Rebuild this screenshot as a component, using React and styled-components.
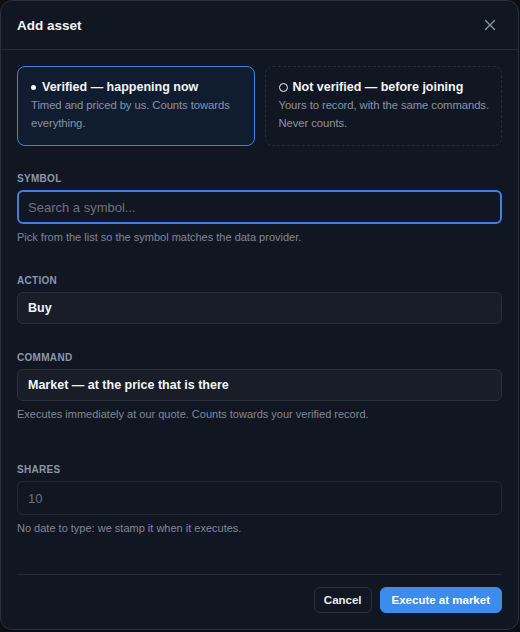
import React from 'react';
import styled, {createGlobalStyle} from 'styled-components';

const GlobalStyle = createGlobalStyle`
    html, body {
        margin: 0;
        padding: 0;
        background: #0b0e14;
        font-family: "Liberation Sans", Arial, sans-serif;
    }
    * { box-sizing: border-box; }
`;

const Dialog = styled.div`
    width: 519px;
    height: 630px;
    background: #111722;
    border: 1px solid #2b303b;
    border-radius: 12px;
    display: flex;
    flex-direction: column;
    color: #e8ecf2;
`;

const Header = styled.div`
    height: 49px;
    padding: 0 16px;
    border-bottom: 1px solid #262b36;
    display: flex;
    align-items: center;
    justify-content: space-between;
`;

const Title = styled.h2`
    margin: 0;
    font-size: 13.5px;
    font-weight: 700;
    color: #f3f5f8;
`;

const CloseButton = styled.button`
    background: none;
    border: none;
    padding: 0;
    width: 16px;
    height: 16px;
    color: #8a98ab;
    display: flex;
    align-items: center;
    justify-content: center;
    margin-right: 4px;
`;

const Body = styled.div`
    flex: 1;
    padding: 16px 16px 16px;
    display: flex;
    flex-direction: column;
`;

const Modes = styled.div`
    display: grid;
    grid-template-columns: 1fr 1fr;
    gap: 10px;
`;

const ModeCard = styled.div`
    height: 80px;
    padding: 11px 6px 11px 13px;
    border-radius: 8px;
    border: 1px ${p => p.active ? 'solid #3b82e6' : 'dashed #262c37'};
    background: ${p => p.active ? '#101c30' : 'transparent'};
`;

const ModeTitle = styled.div`
    font-size: 12.5px;
    font-weight: 700;
    line-height: 18px;
    color: #f3f5f8;
    display: flex;
    align-items: center;
`;

const Mark = styled.span`
    flex: none;
    width: ${p => p.filled ? 5 : 9}px;
    height: ${p => p.filled ? 5 : 9}px;
    margin: ${p => p.filled ? '0 6px 0 0' : '0 5px 0 0'};
    border-radius: 50%;
    border: ${p => p.filled ? 'none' : '1.5px solid #f3f5f8'};
    background: ${p => p.filled ? '#f3f5f8' : 'transparent'};
`;

const ModeText = styled.div`
    font-size: 11.3px;
    letter-spacing: -0.08px;
    line-height: 18px;
    color: #8a94a3;
`;

const Field = styled.div`
    margin-top: ${p => p.gap}px;
    display: flex;
    flex-direction: column;
`;

const Label = styled.label`
    font-size: 10px;
    font-weight: 700;
    line-height: 12px;
    letter-spacing: 0.03em;
    text-transform: uppercase;
    color: #8a97aa;
    margin-bottom: 5px;
`;

const TextInput = styled.div`
    height: 34px;
    border-radius: 6px;
    border: ${p => p.focused ? '2px solid #3b82e6' : '1px solid #232935'};
    padding: 0 ${p => p.focused ? 9 : 10}px;
    display: flex;
    align-items: center;
    font-size: 13px;
    color: #6b7280;
`;

const Select = styled.div`
    height: 32px;
    border-radius: 6px;
    border: 1px solid #2a303c;
    background: #181d28;
    padding: 0 10px;
    display: flex;
    align-items: center;
    font-size: 12.5px;
    font-weight: 700;
    color: #f3f5f8;
`;

const Help = styled.div`
    margin-top: 6px;
    font-size: 11px;
    line-height: 14px;
    color: #7f8896;
`;

const Footer = styled.div`
    margin-top: auto;
    padding-top: 12px;
    border-top: 1px solid #262b36;
    display: flex;
    justify-content: flex-end;
    gap: 8px;
`;

const Button = styled.button`
    height: 26px;
    padding: 0 ${p => p.primary ? 11 : 9}px;
    border-radius: 6px;
    font-family: inherit;
    font-size: 11.5px;
    font-weight: 700;
    border: 1px solid ${p => p.primary ? '#3d8bea' : '#2b313c'};
    background: ${p => p.primary ? '#3d8bea' : 'transparent'};
    color: ${p => p.primary ? '#ffffff' : '#e8ecf2'};
`;

export default function App() {
    return (
        <Dialog>
            <GlobalStyle />
            <Header>
                <Title>Add asset</Title>
                <CloseButton aria-label="Close">
                    <svg width="12" height="12" viewBox="0 0 12 12" fill="none" stroke="currentColor" strokeWidth="1.3" strokeLinecap="round">
                        <path d="M1.5 1.5l9 9M10.5 1.5l-9 9"/>
                    </svg>
                </CloseButton>
            </Header>
            <Body>
                <Modes>
                    <ModeCard active>
                        <ModeTitle><Mark filled />Verified — happening now</ModeTitle>
                        <ModeText>Timed and priced by us. Counts towards everything.</ModeText>
                    </ModeCard>
                    <ModeCard>
                        <ModeTitle><Mark />Not verified — before joining</ModeTitle>
                        <ModeText>Yours to record, with the same commands. Never counts.</ModeText>
                    </ModeCard>
                </Modes>

                <Field gap={27}>
                    <Label>Symbol</Label>
                    <TextInput focused>Search a symbol...</TextInput>
                    <Help>Pick from the list so the symbol matches the data provider.</Help>
                </Field>

                <Field gap={31}>
                    <Label>Action</Label>
                    <Select>Buy</Select>
                </Field>

                <Field gap={28}>
                    <Label>Command</Label>
                    <Select>Market — at the price that is there</Select>
                    <Help>Executes immediately at our quote. Counts towards your verified record.</Help>
                </Field>

                <Field gap={43}>
                    <Label>Shares</Label>
                    <TextInput>10</TextInput>
                    <Help>No date to type: we stamp it when it executes.</Help>
                </Field>

                <Footer>
                    <Button>Cancel</Button>
                    <Button primary>Execute at market</Button>
                </Footer>
            </Body>
        </Dialog>
    );
}
